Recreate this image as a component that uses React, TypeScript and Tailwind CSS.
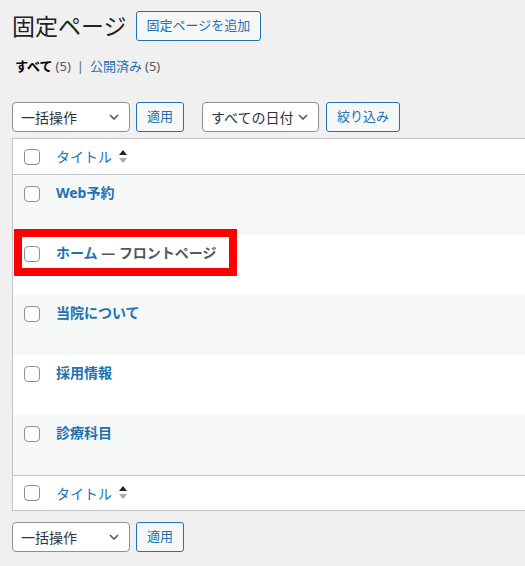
import React from "react";

const pages = [
  { id: 1, title: "Web予約" },
  { id: 2, title: "ホーム", state: "フロントページ" },
  { id: 3, title: "当院について" },
  { id: 4, title: "採用情報" },
  { id: 5, title: "診療科目" },
];

function Checkbox() {
  return (
    <span className="block w-4 h-4 shrink-0 rounded-[4px] border border-[#8c8f94] bg-white" />
  );
}

function SortIcon() {
  return (
    <svg width="8" height="14" viewBox="0 0 8 14" className="ml-[7px]">
      <polygon points="0,5 4,0 8,5" fill="#1d2327" />
      <polygon points="0,8 8,8 4,13" fill="#a7aaad" />
    </svg>
  );
}

function Chevron() {
  return (
    <svg width="10" height="6" viewBox="0 0 10 6" className="shrink-0">
      <path d="M1 1l4 4 4-4" fill="none" stroke="#50575e" strokeWidth="1.6" />
    </svg>
  );
}

function Select({ label, width }: { label: string; width: string }) {
  return (
    <div
      className={`${width} h-[30px] flex items-center justify-between pl-[8px] pr-[10px] bg-white border border-[#8c8f94] rounded-[4px] text-[14px] text-[#2c3338]`}
    >
      <span>{label}</span>
      <Chevron />
    </div>
  );
}

function Button({ children, className = "" }: { children: React.ReactNode; className?: string }) {
  return (
    <button
      className={`h-[30px] px-[10px] bg-[#f6f7f7] border border-[#2271b1] rounded-[3px] text-[13px] text-[#2271b1] ${className}`}
    >
      {children}
    </button>
  );
}

function HeaderRow({ bottom }: { bottom?: boolean }) {
  return (
    <div
      className={`flex items-center pl-[11px] ${
        bottom ? "h-[35px] border-t" : "h-[36px] border-b"
      } border-[#c3c4c7]`}
    >
      <Checkbox />
      <span className="ml-4 text-[14px] text-[#2271b1]">タイトル</span>
      <SortIcon />
    </div>
  );
}

export default function App() {
  return (
    <div className="min-h-screen overflow-hidden bg-[#f0f0f1] font-['Noto_Sans','Noto_Sans_CJK_JP',sans-serif] text-[#3c434a]">
      <div className="pl-[12px] pt-[11px]">
        {/* Heading */}
        <div className="flex items-center gap-[9px]">
          <h1 className="text-[23px] leading-[30px] text-[#1d2327]">固定ページ</h1>
          <Button>固定ページを追加</Button>
        </div>

        {/* Status filter */}
        <div className="mt-[15px] ml-[3px] flex items-center text-[13px] leading-[20px]">
          <span className="font-bold text-[#000]">すべて</span>
          <span className="ml-[3px] text-[#50575e]">(5)</span>
          <span className="mx-[6px] text-[#646970]">|</span>
          <span className="text-[#2271b1]">公開済み</span>
          <span className="ml-[3px] text-[#50575e]">(5)</span>
        </div>

        {/* Top actions */}
        <div className="mt-[26px] flex items-center">
          <Select label="一括操作" width="w-[118px]" />
          <Button className="ml-[6px]">適用</Button>
          <Select label="すべての日付" width="w-[117px] ml-[18px]" />
          <Button className="ml-[7px]">絞り込み</Button>
        </div>

        {/* Pages table */}
        <div className="mt-[6px] w-[560px] bg-white border border-[#c3c4c7]">
          <HeaderRow />
          {pages.map((page, i) => (
            <div
              key={page.id}
              className={`relative h-[60px] flex items-start pl-[11px] ${
                i % 2 === 0 ? "bg-[#f6f7f7]" : "bg-white"
              }`}
            >
              <div className="mt-[11px]">
                <Checkbox />
              </div>
              <div className="ml-4 mt-[8px] text-[14px] leading-[20px] font-bold">
                <span className="text-[#2271b1]">{page.title}</span>
                {page.state && (
                  <span className="text-[#50575e]"> — {page.state}</span>
                )}
              </div>
              {page.state && (
                <div className="absolute left-[1px] top-[-6px] w-[223px] h-[47px] border-[8px] border-[#ff0000]" />
              )}
            </div>
          ))}
          <HeaderRow bottom />
        </div>

        {/* Bottom actions */}
        <div className="mt-[11px] flex items-center">
          <Select label="一括操作" width="w-[118px]" />
          <Button className="ml-[6px]">適用</Button>
        </div>
      </div>
    </div>
  );
}
